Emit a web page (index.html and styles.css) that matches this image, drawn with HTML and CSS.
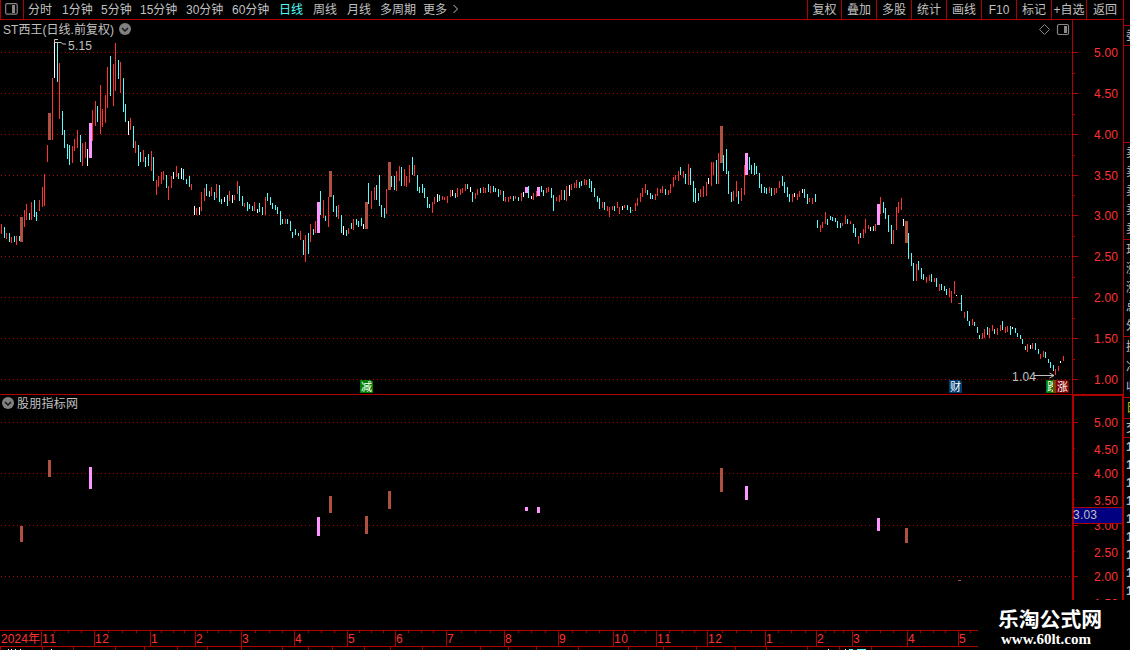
FILE: index.html
```html
<!doctype html>
<html lang="zh-CN">
<head>
    <meta charset="UTF-8">
    <title>ST西王 日线</title>
    <link rel="stylesheet" href="styles.css">
</head>
<body>
<div class="app">
    <div class="left">
        <div class="toolbar">
            <div class="layout-btn">
                <svg width="13" height="12"><rect x="0.700" y="0.700" width="11.500" height="10.500" rx="1.5" fill="none" stroke="#888" stroke-width="1.2"/><rect x="7" y="2" width="3" height="8" fill="#888"/></svg>
            </div>
            <div class="periods">
                <span style="width:34px">分时</span>
                <span style="width:39px">1分钟</span>
                <span style="width:39px">5分钟</span>
                <span style="width:46px">15分钟</span>
                <span style="width:46px">30分钟</span>
                <span style="width:47px">60分钟</span>
                <span class="on" style="width:34px">日线</span>
                <span style="width:34px">周线</span>
                <span style="width:33px">月线</span>
                <span style="width:43px">多周期</span>
                <span style="width:28px">更多</span>
                <svg width="8" height="11"><path d="M1.500 1L5.500 5L1.500 9" fill="none" stroke="#c0c0c0"/></svg>
            </div>
            <div class="actions">
                <span>复权</span>
                <span>叠加</span>
                <span>多股</span>
                <span>统计</span>
                <span>画线</span>
                <span>F10</span>
                <span>标记</span>
                <span>+自选</span>
                <span>返回</span>
            </div>
        </div>

        <svg class="main" width="1123" height="375" viewBox="0 20 1123 375">
            <g id="mainGrid"></g>
            <text class="t" x="3" y="33.5" textLength="111">ST西王(日线.前复权)</text>
            <circle cx="125" cy="29" r="6" fill="#808080"/>
            <path d="M122 28l3 3l3-3" fill="none" stroke="#111" stroke-width="1.4"/>
            <path d="M1039.500 29.500l5-5l5 5l-5 5z" fill="none" stroke="#888"/>
            <rect x="1057.500" y="24.500" width="11" height="10" rx="1.500" fill="none" stroke="#888" stroke-width="1.2"/>
            <rect x="1064" y="26" width="3" height="7" fill="#888"/>
            <g id="candles" shape-rendering="crispEdges"></g>
            <path d="M58 39.500h-3.500v3h3v2M58 42.500h3l2 1.500h3" fill="none" stroke="#c0c0c0"/>
            <text class="n" x="68" y="50" textLength="24">5.15</text>
            <text class="n" x="1012" y="381" textLength="24">1.04</text>
            <path d="M1034 375.500h20M1049.500 373l4.500 2.500l-4.500 2.500" fill="none" stroke="#c0c0c0"/>
            <g class="tags">
                <path d="M360 380h11l2 2v11h-13z" fill="#008000"/>
                <text x="361" y="391">减</text>
                <path d="M949 380h11l2 2v11h-13z" fill="#003c70"/>
                <text x="950" y="391">财</text>
                <path d="M1046 380h11v13h-11z" fill="#008000"/>
                <text x="1047" y="391">跌</text>
                <path d="M1053 380h3v13h-3z" fill="#804000"/>
                <path d="M1056 380h11l2 2v11h-13z" fill="#800000"/>
                <text x="1057" y="391">涨</text>
            </g>
            <path d="M0 394.500H1123M1072.500 20V395" class="line"/>
        </svg>

        <svg class="sub" width="1123" height="235" viewBox="0 395 1123 235">
            <g id="subGrid"></g>
            <circle cx="8" cy="403" r="6" fill="#808080"/>
            <path d="M5 402l3 3l3-3" fill="none" stroke="#111" stroke-width="1.4"/>
            <text class="t" x="17" y="407.500" textLength="61">股朋指标网</text>
            <g id="signals" shape-rendering="crispEdges"></g>
            <path d="M1072 395h51v1h-51zM1072 395h2v205h-2zM1122 395h1v205h-1z" fill="#b00000"/>
            <rect x="1074" y="508" width="48" height="15" fill="#000080"/>
            <path d="M1074 507.500h48M1074 523.500h48" class="line"/>
            <text class="n" x="1073" y="519" textLength="24">3.03</text>
        </svg>

        <svg class="months" width="1123" height="20" viewBox="0 630 1123 20">
            <g id="months"></g>
        </svg>
    </div>

    <div class="quote">
        <div style="height:26px"></div>
        <div style="height:20px"><b>委</b></div>
        <div style="height:97px"></div>
        <div style="height:97px"><b>卖</b><b>卖</b><b>卖</b><b>卖</b><b>卖</b></div>
        <div style="height:97px"><b>现</b><b>涨</b><b>涨</b><b>总</b><b>外</b></div>
        <div style="height:61px"><b>换</b><b>净</b><b>收</b></div>
        <div class="yellow" style="height:21px"><b>日</b></div>
        <div style="height:19px"><b>交</b></div>
        <div class="times"><b>1</b><b>1</b><b>1</b><b>1</b><b>1</b><b>1</b><b>1</b><b>1</b><b>1</b></div>
    </div>

    <div class="mark">
        <div class="mark-name">乐淘公式网</div>
        <div class="mark-url">www.60lt.com</div>
    </div>
</div>
<script src="script.js"></script>
</body>
</html>
```

FILE: styles.css
```css
* {
    box-sizing: border-box;
}

body {
    margin: 0;
    background: #000;
    color: #c0c0c0;
    overflow: hidden;
    font: 12px/19px "Liberation Sans", "Noto Sans CJK SC", sans-serif;
}

.app {
    position: relative;
    display: flex;
    width: 1130px;
    height: 650px;
}

.left {
    width: 1123px;
    flex: none;
}

.left > svg {
    display: block;
}

.toolbar {
    display: flex;
    height: 20px;
    border-bottom: 1px solid #b00000;
    line-height: 20px;
    white-space: nowrap;
}

.layout-btn {
    width: 24px;
    padding: 3px 0 0 4px;
    border: solid #b00000;
    border-width: 0 1px;
}

.layout-btn svg {
    display: block;
}

.periods {
    display: flex;
    flex: 1;
    padding-left: 4px;
}

.periods svg {
    margin: 4px 0 0 1px;
}

.periods .on {
    color: #54fcfc;
}

.actions {
    display: flex;
}

.actions span {
    width: 35px;
    border-left: 1px solid #b00000;
    text-align: center;
}

.actions span:first-child {
    width: 34px;
}

.actions span:last-child {
    width: 37px;
}

.line {
    fill: none;
    stroke: #b00000;
    shape-rendering: crispEdges;
}

.dots {
    stroke: #b00000;
    stroke-dasharray: 1 3;
    shape-rendering: crispEdges;
}

.t,
.n {
    fill: #c0c0c0;
    font-size: 12px;
}

.red {
    fill: #ff3232;
}

.tags text {
    fill: #fff;
    font-size: 11px;
}

/* right quote column, only its first pixels fit in the window */
.quote {
    width: 7px;
    height: 600px;
    overflow: hidden;
    border-left: 1px solid #b00000;
}

.quote div {
    display: flex;
    flex-direction: column;
    justify-content: space-around;
    padding-left: 2px;
    overflow: hidden;
    border-bottom: 1px solid #b00000;
}

.quote b {
    width: 12px;
    font-weight: normal;
    line-height: 16px;
}

.quote .yellow {
    color: #c0c000;
}

.quote .times {
    height: 162px;
    border: 0;
}

.quote .times b {
    font-size: 13px;
    font-weight: bold;
}

.mark {
    position: absolute;
    left: 978px;
    top: 600px;
    width: 152px;
    height: 50px;
    padding: 7px 0 0 20px;
    background: #000;
    color: #fff;
    white-space: nowrap;
}

.mark-name {
    font: bold 20.8px/22px "Noto Sans CJK SC", sans-serif;
}

.mark-url {
    padding: 3px 0 0 3px;
    font: bold 15px/14px "Liberation Serif", serif;
}
```

FILE: script.js
```js
var colors = {r: "#ff3232", c: "#54fcfc", w: "#fff", b: "#b05040", p: "#ff96ff"};

// x top bottom colour
var candles = "1 224 234 r,4 227 238 c,6 233 239 r,9 233 242 c,11 237 243 r,14 236 242 c,16 236 245 r,19 236 241 c," +
    "24 210 227 r,26 204 220 r,29 213 220 c,31 202 220 r,34 200 217 c,36 212 221 c,39 200 211 r,42 187 207 r,44 174 206 r," +
    "47 145 162 r,52 78 140 r,54 40 78 w,57 42 82 c,59 63 119 r,62 111 135 c,64 130 148 c,67 144 159 c,69 145 165 c," +
    "72 146 163 r,74 139 151 r,77 130 148 r,80 135 162 c,82 143 166 r,85 142 158 r,87 149 166 w,92 110 141 r,95 101 126 r," +
    "97 106 122 c,100 85 134 r,102 109 127 r,105 95 123 r,107 67 108 r,110 56 96 c,113 64 106 r,115 43 91 r,118 60 79 c," +
    "120 62 93 r,123 78 112 c,125 104 122 c,128 121 135 w,130 118 130 r,133 126 148 c,135 141 153 r,138 145 166 c," +
    "140 152 162 c,143 150 162 r,145 157 167 c,148 154 166 c,151 151 171 r,153 157 181 c,156 180 195 r,158 176 187 r," +
    "161 172 184 r,163 171 180 r,166 175 188 c,168 186 200 r,171 176 188 r,173 172 179 w,176 166 177 r,178 173 179 c," +
    "181 168 179 w,183 169 180 c,186 179 184 c,189 176 187 c,191 184 190 r,194 206 215 w,196 208 215 r,199 207 215 w," +
    "201 192 211 r,204 188 201 r,206 184 196 c,209 191 197 c,211 187 196 r,214 192 200 c,216 184 198 r,219 185 202 c," +
    "221 199 204 c,224 197 202 w,227 195 206 c,229 191 201 r,232 195 203 w,234 195 200 r,237 181 194 r,239 186 201 c," +
    "242 196 206 c,244 203 207 r,247 202 211 c,249 204 209 c,252 206 211 c,254 202 211 r,257 209 213 w,259 203 212 c," +
    "262 207 215 c,265 197 215 r,267 193 201 c,270 197 205 c,272 203 209 c,275 205 210 c,277 207 214 c,280 211 225 c," +
    "282 219 224 c,285 219 224 r,287 219 224 c,290 221 231 c,292 232 238 c,295 229 235 c,298 233 236 c,300 231 240 r," +
    "303 240 255 c,305 235 262 r,308 233 254 c,310 224 242 r,313 229 235 c,315 221 233 r,320 191 215 c,323 200 218 r," +
    "325 216 221 c,328 197 227 r,333 195 212 c,336 206 217 c,338 205 219 r,341 215 233 c,343 226 235 w,346 230 236 c," +
    "348 228 234 r,351 223 229 c,353 219 230 r,356 219 225 c,358 221 227 c,361 218 226 c,363 224 229 w,368 183 204 c," +
    "371 191 209 r,374 187 200 r,376 185 200 c,379 175 206 c,381 205 217 c,384 208 218 c,386 189 214 r,391 176 187 c," +
    "394 176 190 c,396 171 191 r,399 166 181 r,401 167 186 c,404 169 186 r,406 176 187 r,409 165 183 r,412 157 175 c," +
    "414 165 176 r,417 175 191 c,419 187 193 c,422 184 193 c,424 188 198 c,427 197 208 c,429 204 208 c,432 202 213 r," +
    "434 197 204 r,437 194 202 w,439 195 201 c,442 196 200 r,444 197 200 r,447 196 203 r,450 190 197 r,452 190 196 w," +
    "455 193 198 c,457 188 197 r,460 189 195 r,462 188 193 r,465 184 191 r,467 184 189 c,470 187 192 w,472 192 202 c," +
    "475 193 199 r,477 189 195 r,480 188 193 c,483 187 193 r,485 188 193 r,488 184 192 c,490 186 193 r,493 186 192 c," +
    "495 188 192 c,498 189 197 c,500 190 195 r,503 191 201 c,505 197 202 r,508 197 202 r,510 196 199 r,513 196 201 c," +
    "515 196 199 r,518 197 201 c,521 193 201 r,523 192 197 w,528 186 198 c,531 196 199 w,533 193 200 r,536 191 197 r," +
    "541 186 192 c,543 190 196 c,546 188 193 r,548 187 192 r,551 188 198 c,553 195 211 c,556 197 201 r,559 195 202 r," +
    "561 190 200 r,564 190 200 c,566 186 201 r,569 185 196 w,571 184 190 r,574 183 188 r,576 180 188 r,579 182 188 c," +
    "581 181 186 c,584 179 185 r,586 180 185 r,589 179 188 c,591 181 192 c,594 188 197 c,597 196 202 c,599 198 209 c," +
    "602 202 208 r,604 202 210 c,607 206 211 r,609 207 217 r,612 206 210 r,614 206 211 c,617 202 208 r,619 207 214 r," +
    "622 206 210 w,624 205 208 r,627 205 210 c,630 207 213 c,632 210 211 r,635 203 211 r,637 198 206 r,640 193 202 r," +
    "642 188 197 r,645 184 193 r,647 190 195 c,650 193 199 c,652 195 199 c,655 194 200 r,657 188 196 r,660 189 193 r," +
    "662 186 193 r,665 189 195 c,668 190 195 r,670 184 193 r,673 177 187 r,675 175 180 r,678 171 181 r,680 167 175 c," +
    "683 171 178 r,685 174 184 c,688 164 185 r,690 168 185 c,693 181 202 c,695 188 203 c,698 193 201 c,700 189 197 r," +
    "703 186 197 r,706 182 196 r,708 178 184 w,711 162 186 r,713 162 175 r,716 160 184 c,718 153 184 r,723 155 171 c," +
    "726 149 174 c,728 171 194 c,731 192 202 c,733 191 201 r,736 181 197 r,738 191 204 c,741 188 201 r,744 165 195 r," +
    "749 157 170 c,751 165 174 c,754 163 175 c,756 166 174 c,759 173 188 c,761 184 193 c,764 187 193 c,766 188 194 c," +
    "769 187 193 r,771 188 196 c,774 188 195 r,776 188 193 r,779 181 188 r,782 176 186 c,784 182 193 c,787 187 197 c," +
    "789 194 202 c,792 194 202 r,794 193 197 w,797 194 200 r,799 191 197 r,802 189 193 w,804 189 198 c,807 194 204 c," +
    "809 198 202 r,812 198 204 r,815 194 202 c,817 220 228 c,820 225 232 r,822 222 228 r,825 212 224 r,827 219 225 c," +
    "830 216 220 c,832 217 221 c,835 218 222 c,837 221 228 c,840 223 228 c,842 223 226 r,845 215 224 r,847 219 224 c," +
    "850 221 224 r,853 224 233 c,855 228 237 c,858 236 244 r,860 233 238 c,863 229 238 r,865 219 233 r,868 225 229 r," +
    "870 227 231 w,873 226 231 c,875 224 231 r,880 197 214 r,883 202 213 c,885 208 219 c,888 215 232 c,891 225 244 c," +
    "893 230 244 r,896 207 230 r,898 202 213 r,901 198 210 r,903 219 226 w,908 233 259 c,911 253 266 c,913 263 281 c," +
    "916 264 281 r,918 261 270 c,921 268 279 c,923 274 280 c,926 277 283 r,929 275 281 r,931 274 282 c,934 278 282 r," +
    "936 278 287 c,939 284 291 r,941 284 290 c,944 286 291 c,946 289 295 c,949 288 297 r,951 291 303 r,954 281 294 r," +
    "956 295 296 w,961 295 311 c,964 312 318 r,967 311 321 c,969 321 326 c,972 319 325 r,974 322 326 c,977 327 333 c," +
    "979 335 339 c,982 333 339 r,984 329 338 r,987 327 335 c,989 328 338 r,992 325 331 r,994 329 334 c,997 328 335 r," +
    "1000 325 331 r,1002 321 330 c,1005 327 333 r,1007 326 332 r,1010 326 335 c,1012 327 329 w,1015 328 333 c," +
    "1017 333 337 c,1020 335 339 c,1022 339 344 c,1025 346 350 c,1027 344 352 r,1030 345 349 w,1032 343 349 r," +
    "1035 343 350 c,1038 349 354 c,1040 354 359 r,1043 351 357 r,1045 352 358 c,1048 359 363 c,1050 362 368 c," +
    "1053 365 371 c,1055 369 375 r,1058 366 371 r,1060 361 363 w,1063 356 361 r";

var marked = "20 217 242 b,48 113 140 b,89 123 158 p,317 202 233 p,329 171 197 b,365 202 229 b,388 162 190 b," +
    "525 187 193 p,537 187 196 p,720 126 163 b,745 153 175 p,877 204 225 p,905 221 243 b,958 303 304 b";

var signals = "20 526 542 b,48 460 477 b,89 467 489 p,317 517 536 p,329 496 513 b,365 516 534 b,388 491 509 b," +
    "525 507 511 p,537 507 513 p,720 468 492 b,745 486 500 p,877 518 531 p,905 528 543 b,958 580 581 b";

function bars(str, w) {
    return str.split(",").map(function (s) {
        var a = s.split(" ");
        return '<rect x="' + a[0] + '" y="' + a[1] + '" width="' + w + '" height="' + (a[2] - a[1]) + '" fill="' + colors[a[3]] + '"/>';
    }).join("");
}

function line(x1, y1, x2, y2) {
    return '<path class="line" d="M' + x1 + ' ' + y1 + 'L' + x2 + ' ' + y2 + '"/>';
}

function label(x, y, w, s) {
    return '<text class="n red" x="' + x + '" y="' + y + '"' + (w ? ' textLength="' + w + '"' : '') + '>' + s + '</text>';
}

// dotted rows with a long tick, short ticks between them
function grid(rows, minor) {
    var out = "";
    rows.forEach(function (y) {
        out += '<path class="dots" d="M1 ' + (y + 0.5) + 'H1071"/>' + line(1073, y + 0.5, 1078, y + 0.5);
    });
    minor.forEach(function (y) {
        out += line(1073, y + 0.5, 1075, y + 0.5);
    });
    return out;
}

function prices(list) {
    return list.map(function (p) {
        return label(1094, p[0] + 5, 24, p[1]);
    }).join("");
}

function put(id, html) {
    document.getElementById(id).innerHTML = html;
}

put("mainGrid", grid([52, 93, 134, 175, 215, 256, 297, 338, 379], [73, 114, 155, 195, 236, 277, 318, 359]) +
    prices([[52, "5.00"], [93, "4.50"], [134, "4.00"], [175, "3.50"], [215, "3.00"], [256, "2.50"], [297, "2.00"], [338, "1.50"], [379, "1.00"]]));
put("candles", bars(candles, 1) + bars(marked, 3));

put("subGrid", grid([422, 473, 525, 576], [448, 499, 551]) +
    prices([[422, "5.00"], [449, "4.50"], [473, "4.00"], [500, "3.50"], [525, "3.00"], [552, "2.50"], [576, "2.00"], [603, "1.50"]]));
put("signals", bars(signals, 3));

var months = [[41, "11"], [94, "12"], [150, "1"], [195, "2"], [241, "3"], [294, "4"], [347, "5"], [395, "6"], [446, "7"], [504, "8"],
    [558, "9"], [613, "10"], [656, "11"], [707, "12"], [765, "1"], [816, "2"], [852, "3"], [907, "4"], [958, "5"]];
var weeks = [54, 68, 81, 108, 122, 136, 161, 173, 184, 207, 218, 230, 255, 269, 282, 308, 321, 334, 359, 371, 383, 408, 421, 433,
    461, 475, 490, 518, 531, 545, 572, 586, 599, 624, 634, 645, 669, 682, 694, 722, 736, 751, 778, 791, 805, 825, 834, 843,
    866, 880, 893, 920, 933, 945, 970];
var lower = [0, 42, 73, 115, 144, 177, 207, 241, 282, 308, 332, 364, 390, 422, 480, 508, 536, 578, 628, 663, 696, 735, 766, 807, 839, 871];

var axis = line(0, 630.5, 978, 630.5) + line(0, 646.5, 978, 646.5) + label(1, 643, 39, "2024年");
months.forEach(function (m) {
    axis += line(m[0] + 0.5, 630, m[0] + 0.5, 647) + label(m[0] + 1, 643, m[1].length > 1 ? 14 : 0, m[1]);
});
weeks.forEach(function (x) {
    axis += line(x + 0.5, 631, x + 0.5, 633);
});
lower.forEach(function (x) {
    axis += line(x + 0.5, 647, x + 0.5, 650);
});
// top edge of the status row under the axis
[[8, 1, "w"], [11, 1, "w"], [15, 1, "w"], [20, 1, "w"], [51, 1, "w"], [828, 1, "w"], [845, 1, "w"], [849, 4, "c"], [857, 9, "c"]].forEach(function (d) {
    axis += '<rect x="' + d[0] + '" y="649" width="' + d[1] + '" height="1" fill="' + colors[d[2]] + '"/>';
});
put("months", axis);
```
